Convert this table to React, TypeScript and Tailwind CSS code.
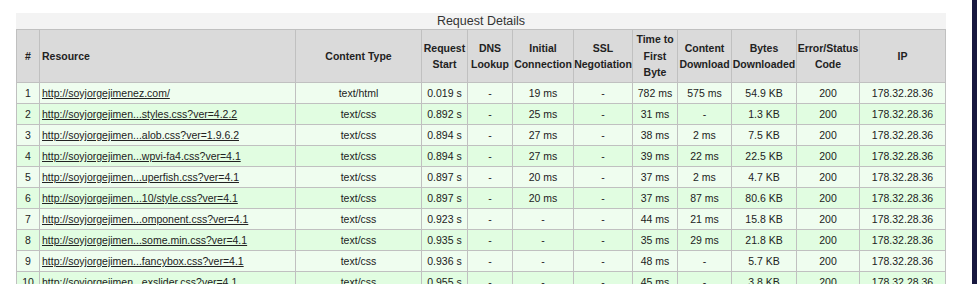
import React from 'react'

type Req = {
  url: string
  type: string
  start: string
  dns: string
  conn: string
  ssl: string
  ttfb: string
  dl: string
  bytes: string
}

const requests: Req[] = [
  { url: 'http://soyjorgejimenez.com/', type: 'text/html', start: '0.019 s', dns: '-', conn: '19 ms', ssl: '-', ttfb: '782 ms', dl: '575 ms', bytes: '54.9 KB' },
  { url: 'http://soyjorgejimen...styles.css?ver=4.2.2', type: 'text/css', start: '0.892 s', dns: '-', conn: '25 ms', ssl: '-', ttfb: '31 ms', dl: '-', bytes: '1.3 KB' },
  { url: 'http://soyjorgejimen...alob.css?ver=1.9.6.2', type: 'text/css', start: '0.894 s', dns: '-', conn: '27 ms', ssl: '-', ttfb: '38 ms', dl: '2 ms', bytes: '7.5 KB' },
  { url: 'http://soyjorgejimen...wpvi-fa4.css?ver=4.1', type: 'text/css', start: '0.894 s', dns: '-', conn: '27 ms', ssl: '-', ttfb: '39 ms', dl: '22 ms', bytes: '22.5 KB' },
  { url: 'http://soyjorgejimen...uperfish.css?ver=4.1', type: 'text/css', start: '0.897 s', dns: '-', conn: '20 ms', ssl: '-', ttfb: '37 ms', dl: '2 ms', bytes: '4.7 KB' },
  { url: 'http://soyjorgejimen...10/style.css?ver=4.1', type: 'text/css', start: '0.897 s', dns: '-', conn: '20 ms', ssl: '-', ttfb: '37 ms', dl: '87 ms', bytes: '80.6 KB' },
  { url: 'http://soyjorgejimen...omponent.css?ver=4.1', type: 'text/css', start: '0.923 s', dns: '-', conn: '-', ssl: '-', ttfb: '44 ms', dl: '21 ms', bytes: '15.8 KB' },
  { url: 'http://soyjorgejimen...some.min.css?ver=4.1', type: 'text/css', start: '0.935 s', dns: '-', conn: '-', ssl: '-', ttfb: '35 ms', dl: '29 ms', bytes: '21.8 KB' },
  { url: 'http://soyjorgejimen...fancybox.css?ver=4.1', type: 'text/css', start: '0.936 s', dns: '-', conn: '-', ssl: '-', ttfb: '48 ms', dl: '-', bytes: '5.7 KB' },
  { url: 'http://soyjorgejimen...exslider.css?ver=4.1', type: 'text/css', start: '0.955 s', dns: '-', conn: '-', ssl: '-', ttfb: '45 ms', dl: '-', bytes: '3.8 KB' },
]

const th = 'border border-[#c0c0c0] font-bold text-center align-middle px-0 leading-[16.5px]'
const td = 'border border-[#c0c0c0] text-center h-[21px] p-0 leading-[20px]'

export default function App() {
  return (
    <div className="flex h-screen overflow-hidden bg-white font-['Liberation_Sans',Arial,sans-serif] text-[10.5px] text-[#222]">
      <div className="flex-1 pl-4 pt-[13px] pr-[26px]">
        <div className="h-4 bg-[#f3f3f3] text-center text-[12.5px] leading-4 text-[#333]">Request Details</div>
        <table className="table-fixed border-collapse w-[929px]">
          <colgroup>
            <col className="w-[23px]" />
            <col className="w-[256px]" />
            <col className="w-[126px]" />
            <col className="w-[46px]" />
            <col className="w-[45px]" />
            <col className="w-[61px]" />
            <col className="w-[59px]" />
            <col className="w-[45px]" />
            <col className="w-[54px]" />
            <col className="w-[65px]" />
            <col className="w-[63px]" />
            <col className="w-[86px]" />
          </colgroup>
          <thead>
            <tr className="h-[53px] bg-[#dadada]">
              <th className={th}>#</th>
              <th className={`${th} !text-left pl-[2px]`}>Resource</th>
              <th className={th}>Content Type</th>
              <th className={th}>Request Start</th>
              <th className={th}>DNS Lookup</th>
              <th className={th}>Initial Connection</th>
              <th className={th}>SSL Negotiation</th>
              <th className={th}>Time to First Byte</th>
              <th className={th}>Content Download</th>
              <th className={th}>Bytes Downloaded</th>
              <th className={th}>Error/Status Code</th>
              <th className={th}>IP</th>
            </tr>
          </thead>
          <tbody>
            {requests.map((r, i) => (
              <tr key={i} className={i % 2 === 0 ? 'bg-[#effdef]' : 'bg-[#e1fde1]'}>
                <td className={td}>{i + 1}</td>
                <td className={`${td} !text-left pl-[2px] whitespace-nowrap`}>
                  <a href="#" className="underline text-[#222]">{r.url}</a>
                </td>
                <td className={td}>{r.type}</td>
                <td className={td}>{r.start}</td>
                <td className={td}>{r.dns}</td>
                <td className={td}>{r.conn}</td>
                <td className={td}>{r.ssl}</td>
                <td className={td}>{r.ttfb}</td>
                <td className={td}>{r.dl}</td>
                <td className={td}>{r.bytes}</td>
                <td className={td}>200</td>
                <td className={td}>178.32.28.36</td>
              </tr>
            ))}
          </tbody>
        </table>
      </div>
      <div className="w-[6px] bg-[#18183f]" />
    </div>
  )
}
